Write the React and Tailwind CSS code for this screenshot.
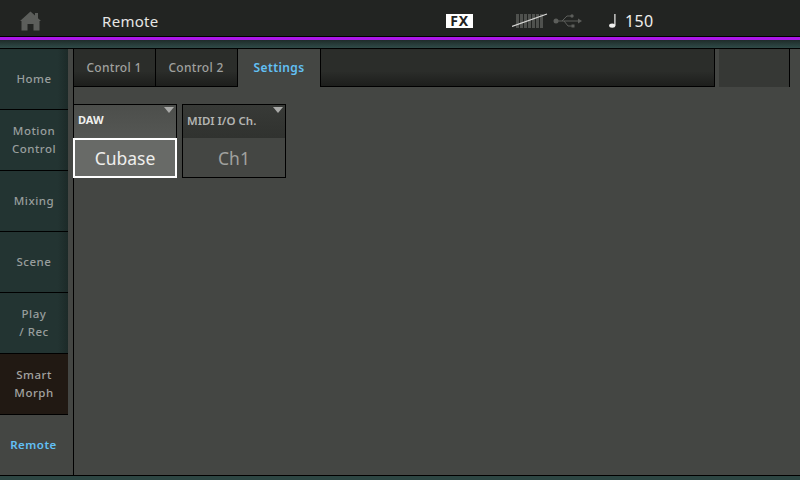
const font = { fontFamily: '"Noto Sans", "Open Sans", sans-serif' }

const sideItems = [
  { label: ['Home'] },
  { label: ['Motion', 'Control'] },
  { label: ['Mixing'] },
  { label: ['Scene'] },
  { label: ['Play', '/ Rec'] },
  { label: ['Smart', 'Morph'], morph: true },
]

function HomeIcon() {
  return (
    <svg width="21" height="20" viewBox="0 0 21 20">
      <path d="M10.5 0.5 L15 4.5 L15 2 L18 2 L18 7.2 L21 10 L19.5 10 L19.5 19.5 L13.5 19.5 L13.5 13 L7.5 13 L7.5 19.5 L1.5 19.5 L1.5 10 L0 10 Z" fill="#5c5e5b" />
    </svg>
  )
}

function KeysIcon() {
  return (
    <svg width="36" height="16" viewBox="0 0 36 16">
      <path d="M4 1h3v14H4zM8 1h3v14H8zM12 1h3v14h-3zM16 1h3v14h-3zM20 1h3v14h-3zM24 1h3v14h-3zM28 1h3v14h-3z" fill="#4f514e" />
      <path d="M0 13.5 L35 1" stroke="#d8d8d6" strokeWidth="1.2" />
    </svg>
  )
}

function UsbIcon() {
  return (
    <svg width="29" height="14" viewBox="0 0 29 14">
      <circle cx="3" cy="7" r="2.5" fill="#5c5e5b" />
      <path d="M3 7 H26 M9 7 L14 2 H18 M11 7 L15 12 H19" stroke="#5c5e5b" strokeWidth="1" fill="none" />
      <path d="M25 4.5 L29 7 L25 9.5 Z" fill="#5c5e5b" />
      <circle cx="19" cy="2" r="1.7" fill="#5c5e5b" />
      <rect x="18.5" y="10.5" width="3" height="3" fill="#5c5e5b" />
    </svg>
  )
}

function NoteIcon() {
  return (
    <svg width="7" height="14" viewBox="0 0 7 14">
      <ellipse cx="3.2" cy="11.6" rx="3.1" ry="2.2" fill="#f0f0ee" />
      <rect x="5.3" y="0" width="1.2" height="11.5" fill="#f0f0ee" />
    </svg>
  )
}

function Param({ title, value, active }) {
  return (
    <div className="w-[104px] h-[74px] flex flex-col relative">
      <div
        className={
          active
            ? 'h-[34px] border border-b-0 border-black bg-gradient-to-b from-[#4c4e4b] to-[#555754] flex items-center pl-[4px] pb-[2px] text-[11px] font-bold text-[#f0f0ee]'
            : 'h-[34px] border border-b-0 border-black bg-gradient-to-b from-[#383a37] to-[#30322f] flex items-center pl-[4px] pb-[2px] text-[11.5px] font-semibold text-[#b4b5b3]'
        }
      >
        {title}
      </div>
      <div className="absolute top-[3px] right-[3px] w-0 h-0 border-l-[5px] border-r-[5px] border-t-[6px] border-l-transparent border-r-transparent border-t-[#a9aaa8]" />
      <div
        className={
          active
            ? 'flex-1 border-2 border-white bg-[#686a67] flex items-center justify-center pt-[1px] text-[17.5px] text-[#eeeeec]'
            : 'flex-1 border border-t-0 border-black bg-[#444643] flex items-center justify-center pt-[1px] text-[17.5px] text-[#a0a19f]'
        }
      >
        {value}
      </div>
    </div>
  )
}

export default function App() {
  return (
    <div className="w-[800px] h-[480px] flex flex-col overflow-hidden bg-[#444643]" style={font}>
      {/* Top bar */}
      <div className="h-[36px] pt-[5px] bg-[#222422] flex items-center">
        <div className="w-[102px] pl-[20px] flex items-center">
          <HomeIcon />
        </div>
        <div className="w-[344px] text-[15px] leading-none text-[#e6e6e4] pt-[1px] tracking-[0.3px]">Remote</div>
        <div className="w-[27px] h-[14px] bg-white text-[#222] text-[14px] leading-[14px] font-bold text-center tracking-[0.8px]">FX</div>
        <div className="ml-[39px] flex items-center">
          <KeysIcon />
        </div>
        <div className="ml-[5px] flex items-center">
          <UsbIcon />
        </div>
        <div className="ml-[27px] flex items-center">
          <NoteIcon />
        </div>
        <div className="ml-[9px] text-[16px] leading-none text-[#eeeeec] tracking-[0.3px]">150</div>
      </div>
      <div className="h-[1px] bg-black" />
      <div className="h-[3px] bg-[#ac18ea]" />
      <div className="h-[8px] bg-gradient-to-b from-[#1e2c2a] to-[#2f4a47]" />
      <div className="h-[1px] bg-black" />

      <div className="flex-1 flex min-h-0">
        {/* Sidebar */}
        <div className="w-[74px] shrink-0 border-r border-black flex flex-col">
          {sideItems.map((item) => (
            <div key={item.label[0]} className="w-[68px] h-[61px] border-b border-black">
              <div
                className={
                  item.morph
                    ? 'h-full flex flex-col items-center justify-center bg-[#211913] text-[11.5px] leading-[18px] font-medium tracking-[0.5px] text-[#a3a3a1]'
                    : 'h-full flex flex-col items-center justify-center bg-gradient-to-r from-[#233432] from-85% to-[#1c2a28] text-[11.5px] leading-[18px] font-medium tracking-[0.5px] text-[#989e9d]'
                }
              >
                {item.label.map((line) => (
                  <span key={line}>{line}</span>
                ))}
              </div>
            </div>
          ))}
          <div className="flex-1 w-[67px] flex items-center justify-center text-[11.5px] font-semibold tracking-[0.5px] text-[#62c0f5]">
            Remote
          </div>
        </div>

        {/* Content */}
        <div className="w-[726px] shrink-0 flex flex-col">
          <div className="h-[38px] flex">
            <div className="w-[82px] border-r border-b border-black bg-gradient-to-b from-[#2b2d2a] from-60% to-[#1d1e1c] flex items-center justify-center pr-[1px] text-[12px] font-medium tracking-[0.3px] text-[#a0a19f]">
              Control 1
            </div>
            <div className="w-[82px] border-r border-b border-black bg-gradient-to-b from-[#2b2d2a] from-60% to-[#1d1e1c] flex items-center justify-center pr-[1px] text-[12px] font-medium tracking-[0.3px] text-[#a0a19f]">
              Control 2
            </div>
            <div className="w-[82px] flex items-center justify-center text-[12px] font-semibold tracking-[0.4px] text-[#62c0f5]">
              Settings
            </div>
            <div className="w-[395px] border-l border-r border-b border-black bg-gradient-to-b from-[#2b2d2a] from-60% to-[#1d1e1c]" />
            <div className="w-[70px] ml-[4px] h-[38px] bg-[#363835]" />
            <div className="w-[11px] h-[38px] border-l border-black" />
          </div>
          <div className="flex-1 flex gap-[5px] pt-[17px] -ml-px items-start">
            <Param title="DAW" value="Cubase" active />
            <Param title="MIDI I/O Ch." value="Ch1" />
          </div>
        </div>
      </div>

      <div className="h-[1px] bg-black" />
      <div className="h-[4px] bg-[#2d4643]" />
    </div>
  )
}
